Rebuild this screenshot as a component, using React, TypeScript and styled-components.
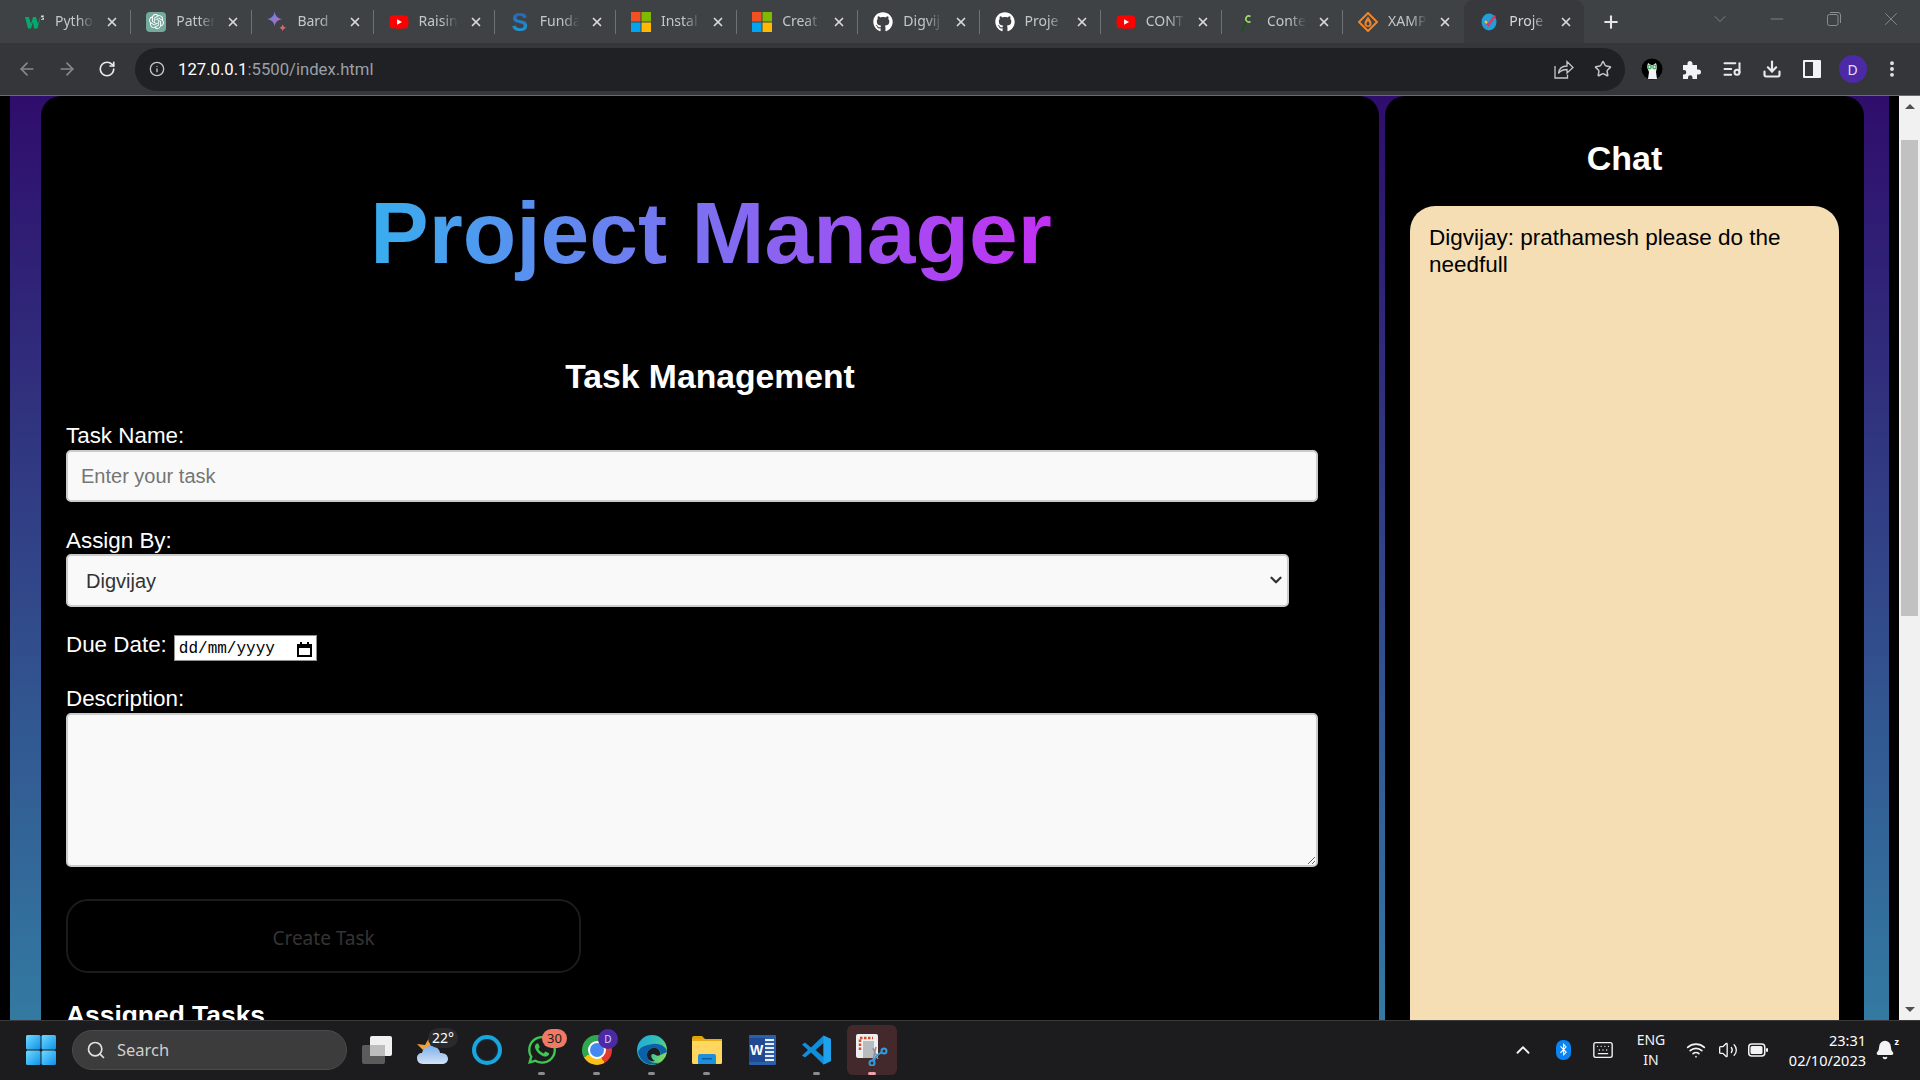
import React, { FC, ReactNode } from 'react';
import styled, { createGlobalStyle } from 'styled-components';
import {
  ArrowLeft, ArrowRight, RotateCw, Info, Star, ListMusic, Download, MoreVertical, Plus, X,
  ChevronDown, ChevronUp, Minus, Search, Keyboard, Wifi, Volume2, Bell,
} from 'lucide-react';
import { FaGithub, FaYoutube, FaWhatsapp, FaBluetoothB } from 'react-icons/fa';
import { SiOpenai } from 'react-icons/si';

const Global = createGlobalStyle`
  html, body { margin: 0; height: 100%; overflow: hidden; background: #000; }
  #root { height: 100%; }
  * { box-sizing: border-box; }
`;

const Shell = styled.div`
  height: 100vh;
  display: flex;
  flex-direction: column;
  font-family: "Liberation Sans", Arial, sans-serif;
`;

/* ---------- browser chrome ---------- */

const TabStrip = styled.div`
  height: 43px;
  flex: none;
  display: flex;
  align-items: stretch;
  padding-left: 10px;
  background: #3e4245;
`;

const Tab = styled.div<{ $active?: boolean }>`
  width: 120.2px;
  flex: none;
  display: flex;
  align-items: center;
  padding: 0 11px 0 15px;
  background: ${p => (p.$active ? '#37393c' : 'transparent')};
  border-radius: ${p => (p.$active ? '9px 9px 0 0' : '0')};
  color: ${p => (p.$active ? '#d6d8da' : '#c4c7c9')};
`;

const TabSep = styled.div<{ $hidden?: boolean }>`
  width: 1px;
  height: 24px;
  flex: none;
  align-self: center;
  background: ${p => (p.$hidden ? 'transparent' : '#6f7275')};
`;

const FavSlot = styled.div`
  width: 20px;
  height: 20px;
  flex: none;
  display: flex;
  align-items: center;
  justify-content: center;
`;

const TabTitle = styled.span`
  flex: 1;
  min-width: 0;
  margin: -2px 0 0 10px;
  font-family: "Noto Sans", sans-serif;
  font-size: 14px;
  white-space: nowrap;
  -webkit-mask-image: linear-gradient(90deg, #000 50%, transparent 85%);
  mask-image: linear-gradient(90deg, #000 50%, transparent 85%);
`;

const TabClose = styled(X)`
  flex: none;
  width: 14px;
  height: 14px;
  margin-left: 4px;
  stroke-width: 3;
  color: #d6d8da;
`;

const NewTab = styled.div`
  width: 54px;
  flex: none;
  display: flex;
  align-items: center;
  justify-content: center;
  color: #e3e5e6;
`;

const WindowControls = styled.div`
  margin-left: auto;
  display: flex;
  color: #8b8e91;
  padding-right: 1px;
`;

const WindowButton = styled.div`
  width: 57px;
  height: 38px;
  display: flex;
  align-items: center;
  justify-content: center;
`;

const RestoreIcon: FC = () => (
  <svg width="14" height="14" viewBox="0 0 14 14" fill="none" stroke="#8b8e91" strokeWidth="1">
    <rect x="0.5" y="2.5" width="10.5" height="11" rx="2" />
    <path d="M3 .5h8a2.5 2.5 0 0 1 2.5 2.5v8" />
  </svg>
);

const Toolbar = styled.div`
  height: 53px;
  flex: none;
  display: flex;
  align-items: center;
  padding-left: 7px;
  background: #35363a;
  border-bottom: 1px solid #6a6b6e;
`;

const ToolButton = styled.div<{ $color?: string }>`
  width: 40px;
  height: 40px;
  flex: none;
  display: flex;
  align-items: center;
  justify-content: center;
  color: ${p => p.$color ?? '#e8eaed'};
`;

const Omnibox = styled.div`
  width: 1490px;
  height: 43px;
  flex: none;
  margin: 0 7px 0 8px;
  display: flex;
  align-items: center;
  padding: 0 3px 0 14px;
  border-radius: 22px;
  background: #202124;
`;

const Url = styled.div`
  flex: 1;
  margin-left: 13px;
  font-family: Roboto, sans-serif;
  font-size: 16.7px;
  color: #9aa0a6;
  span { color: #fff; }
`;

const OmniIcon = styled.div`
  width: 39px;
  display: flex;
  justify-content: center;
  color: #c4c7c9;
`;

const ShareIcon: FC = () => (
  <svg width="20" height="20" viewBox="0 0 20 20" fill="none" stroke="#c4c7c9" strokeWidth="1.3">
    <path d="M1 7v12h12.500v-3.500" />
    <path d="M4.500 14.500c.5-5 4-7.500 8.500-7.500V2.500l6 6-6 5.500V10.500c-3.500 0-6.500 1-8.500 4Z" />
  </svg>
);

const CatBadge: FC = () => (
  <svg width="22" height="22" viewBox="0 0 22 22">
    <circle cx="11" cy="11" r="10.5" fill="#000" />
    <path d="M6 9 L7 5 L10 7 H12 L15 5 L16 9 L15 14 L16 21 H7 L8 14Z" fill="#f2f2f2" />
    <circle cx="8.5" cy="9" r="2.4" fill="#4fae6b" />
    <circle cx="13.5" cy="9" r="2.4" fill="#4fae6b" />
    <circle cx="8.5" cy="9" r="0.9" fill="#eaf7ee" />
    <circle cx="13.5" cy="9" r="0.9" fill="#eaf7ee" />
  </svg>
);

const PuzzleIcon: FC = () => (
  <svg width="19" height="19" viewBox="0 0 19 19">
    <path d="M0 5h4.500V3.500a2.500 2.500 0 0 1 5 0V5H14v4.500h1.500a2.500 2.500 0 0 1 0 5H14V19H9.500v-1.500a2.200 2.200 0 0 0-4.500 0V19H0v-4.500h1a2.300 2.300 0 0 0 0-4.600H0Z" fill="#f2f3f4" />
  </svg>
);

const SidePanelIcon: FC = () => (
  <svg width="18" height="18" viewBox="0 0 18 18">
    <rect x="0" y="0" width="18" height="18" rx="1" fill="#f2f3f4" />
    <rect x="2" y="2" width="8" height="14" fill="#35363a" />
  </svg>
);

const Avatar = styled.div`
  width: 28px;
  height: 28px;
  margin-left: 1px;
  border-radius: 50%;
  background: #4d2aa5;
  color: #e6def8;
  font-family: "Noto Sans", sans-serif;
  font-size: 14px;
  display: flex;
  align-items: center;
  justify-content: center;
`;

/* ---------- favicons ---------- */

const W3Icon: FC = () => (
  <svg width="20" height="14" viewBox="0 0 20 14">
    <path d="M0 2h4l2 7 2-7h3l2 7 2-7h0.5l-3 11.5h-3.5L8 7 6 13.5H3Z" fill="#04a96d" />
    <path d="M16 .5h3v.8l-1 1 1 1v1.5h-3v-.8h2v-.5h-1v-.8h1v-.4h-2Z" fill="#d8dadc" />
  </svg>
);

const OpenAiTile = styled.div`
  width: 20px;
  height: 20px;
  border-radius: 4px;
  background: #74aa9c;
  color: #fff;
  display: flex;
  align-items: center;
  justify-content: center;
`;

const BardIcon: FC = () => (
  <svg width="21" height="21" viewBox="0 0 21 21">
    <defs>
      <linearGradient id="bardA" x1="0" y1="0" x2="1" y2="1">
        <stop offset="0" stopColor="#4f8df5" />
        <stop offset="0.6" stopColor="#9b72cb" />
        <stop offset="1" stopColor="#d96570" />
      </linearGradient>
    </defs>
    <path d="M8 0 C8.500 4.500 11 7 16 8 C11 9 8.500 11.500 8 16 C7.500 11.500 5 9 0 8 C5 7 7.500 4.500 8 0Z" fill="url(#bardA)" />
    <path d="M16.500 13 C16.800 15 17.700 16.200 20 17 C17.700 17.800 16.800 19 16.500 21 C16.200 19 15.300 17.800 13 17 C15.300 16.200 16.200 15 16.500 13Z" fill="#d96570" />
  </svg>
);

const BlueS = styled.span`
  font-family: "Liberation Sans", sans-serif;
  font-weight: 700;
  font-size: 25px;
  line-height: 22px;
  background: linear-gradient(180deg, #2b5fb0, #1b9ee0);
  -webkit-background-clip: text;
  background-clip: text;
  color: transparent;
`;

const MsIcon: FC = () => (
  <svg width="20" height="20" viewBox="0 0 20 20">
    <rect width="9.500" height="9.500" fill="#f25022" />
    <rect x="10.500" width="9.500" height="9.500" fill="#7fba00" />
    <rect y="10.500" width="9.500" height="9.500" fill="#00a4ef" />
    <rect x="10.500" y="10.500" width="9.500" height="9.500" fill="#ffb900" />
  </svg>
);

const ContentIcon: FC = () => (
  <svg width="16" height="20" viewBox="0 0 16 20" fill="none">
    <path d="M3 19 L7 9" stroke="#1f4f22" strokeWidth="2" />
    <path d="M11.500 4.500a3 3 0 1 0 0 5" stroke="#a5d86a" strokeWidth="1.600" />
  </svg>
);

const XamppIcon: FC = () => (
  <svg width="20" height="20" viewBox="0 0 20 20">
    <path d="M10 1 L19 10 L10 19 L1 10Z" fill="none" stroke="#f0842a" strokeWidth="2" strokeLinejoin="round" />
    <path d="M10 4.500 C12 7.500 13.500 9 13.500 11.500 A3.500 3.500 0 0 1 6.500 11.500 C6.500 9 8 7.500 10 4.500Z" fill="#f0842a" />
    <path d="M10 9 C11 10.500 11.500 11 11.500 12 A1.500 1.500 0 0 1 8.500 12 C8.500 11 9 10.500 10 9Z" fill="#3e4245" />
  </svg>
);

const ProjectIcon: FC = () => (
  <svg width="16" height="18" viewBox="0 0 16 18">
    <ellipse cx="8" cy="9" rx="7.500" ry="8.500" fill="#1f9fd8" />
    <path d="M4 8 L7.500 12 L14 2.500" fill="none" stroke="#e0355f" strokeWidth="2.500" />
    <path d="M4 8 L6 10.300" fill="none" stroke="#f2c230" strokeWidth="2.500" />
  </svg>
);

const youtube = <FaYoutube size={20} color="#ff0000" style={{ background: 'linear-gradient(#fff,#fff) center/8px 8px no-repeat' }} />;
const github = <FaGithub size={20} color="#fff" />;

const tabs: { icon: ReactNode; title: string }[] = [
  { icon: <W3Icon />, title: 'Pytho' },
  { icon: <OpenAiTile><SiOpenai size={15} /></OpenAiTile>, title: 'Patter' },
  { icon: <BardIcon />, title: 'Bard' },
  { icon: youtube, title: 'Raisin' },
  { icon: <BlueS>S</BlueS>, title: 'Funda' },
  { icon: <MsIcon />, title: 'Instal' },
  { icon: <MsIcon />, title: 'Creat' },
  { icon: github, title: 'Digvij' },
  { icon: github, title: 'Proje' },
  { icon: youtube, title: 'CONT' },
  { icon: <ContentIcon />, title: 'Conte' },
  { icon: <XamppIcon />, title: 'XAMP' },
];

/* ---------- page ---------- */

const Viewport = styled.div`
  flex: 1;
  min-height: 0;
  display: flex;
  overflow: hidden;
  background: #000;
`;

const Backdrop = styled.div`
  flex: 1;
  min-width: 0;
  margin: 0 10px;
  padding: 0 25px 0 31px;
  display: flex;
  align-items: flex-start;
  gap: 6px;
  overflow: hidden;
  background: linear-gradient(180deg, #2f0d6c 0%, #337aa2 100%);
`;

const Panel = styled.div<{ $width: number }>`
  width: ${p => p.$width}px;
  flex: none;
  background: #000;
  border-radius: 20px;
  color: #fff;
`;

const MainPanel = styled(Panel)`
  padding: 88px 25px 40px;
`;

const ChatPanel = styled(Panel)`
  padding: 42px 25px 0;
`;

const TitleRow = styled.div`
  text-align: center;
  padding-left: 2px;
`;

const Title = styled.h1`
  display: inline-block;
  margin: 0;
  font-size: 87.6px;
  line-height: 98px;
  font-weight: 700;
  background: linear-gradient(90deg, #38aeee, #c42ff3);
  -webkit-background-clip: text;
  background-clip: text;
  color: transparent;
`;

const SectionTitle = styled.h2`
  margin: 74px 0 27px;
  font-size: 33.7px;
  line-height: 40px;
  font-weight: 700;
  text-align: center;
`;

const Label = styled.label`
  display: block;
  font-size: 22.4px;
  line-height: 25px;
  color: #fff;
`;

const fieldBase = `
  display: block;
  border: 2px solid #ccc;
  border-radius: 5px;
  background: #f9f9f9;
  font-family: "Liberation Sans", Arial, sans-serif;
  font-size: 20px;
  color: #333;
`;

const TextInput = styled.input`
  ${fieldBase}
  width: 1252px;
  height: 52px;
  margin: 2px 0 26px;
  padding: 0 13px;
  &::placeholder { color: #757575; }
`;

const SelectWrap = styled.div`
  position: relative;
  width: 1223px;
  margin: 1px 0 25px;
`;

const Select = styled.select`
  ${fieldBase}
  appearance: none;
  width: 100%;
  height: 53px;
  padding: 0 18px;
`;

const SelectCaret = styled(ChevronDown)`
  position: absolute;
  right: 4px;
  top: 17px;
  width: 18px;
  height: 18px;
  stroke-width: 3;
  color: #333;
  pointer-events: none;
`;

const DueRow = styled.div`
  display: flex;
  align-items: flex-start;
  gap: 7px;
  height: 29px;
  margin-bottom: 25px;
`;

const DateBox = styled.div`
  width: 143px;
  height: 26px;
  margin-top: 3px;
  display: flex;
  align-items: center;
  justify-content: space-between;
  padding: 2px 4px 0;
  background: #fff;
  border: 1px solid #8f8f8f;
  color: #000;
  font-family: "Liberation Mono", monospace;
  font-size: 16px;
`;

const Description = styled.textarea`
  ${fieldBase}
  width: 1252px;
  height: 154px;
  margin: 2px 0 32px;
`;

const CreateButton = styled.button`
  display: block;
  width: 40%;
  height: 74px;
  padding-top: 4px;
  border: 2px solid #1b1b1b;
  border-radius: 22px;
  background: transparent;
  color: #343434;
  font-family: "Noto Sans", sans-serif;
  font-size: 19px;
`;

const SubTitle = styled.h3`
  margin: 27px 0 0;
  font-size: 26.4px;
  line-height: 31px;
  font-weight: 700;
`;

const ChatTitle = styled.h2`
  margin: 0 0 28px;
  font-size: 34px;
  line-height: 40px;
  font-weight: 700;
  text-align: center;
`;

const ChatBox = styled.div`
  height: 900px;
  padding: 18px 19px;
  border-radius: 25px;
  background: #f5deb3;
  color: #000;
  font-size: 22.5px;
  line-height: 27px;
`;

const ScrollBar = styled.div`
  width: 21px;
  flex: none;
  display: flex;
  flex-direction: column;
  background: #f1f1f1;
`;

const ScrollArrow = styled.div<{ $down?: boolean }>`
  height: 21px;
  flex: none;
  margin-top: ${p => (p.$down ? 'auto' : '0')};
  display: flex;
  align-items: center;
  justify-content: center;
  &::before {
    content: '';
    border-left: 5px solid transparent;
    border-right: 5px solid transparent;
    ${p => (p.$down ? 'border-top: 5px solid #505050;' : 'border-bottom: 5px solid #505050;')}
  }
`;

const ScrollThumb = styled.div`
  width: 17px;
  height: 476px;
  margin: 23px auto 0;
  background: #c1c1c1;
`;

/* ---------- taskbar ---------- */

const Taskbar = styled.div`
  height: 60px;
  flex: none;
  display: flex;
  align-items: center;
  padding: 0 0 2px 20px;
  background: #1c1c1f;
  border-top: 1px solid #3b3b3d;
  color: #fff;
  font-family: "Noto Sans", sans-serif;
`;

const StartButton = styled.div`
  width: 41px;
  height: 50px;
  flex: none;
  display: flex;
  align-items: center;
  justify-content: center;
`;

const SearchPill = styled.div`
  width: 275px;
  height: 40px;
  flex: none;
  margin: 0 5px 0 11px;
  display: flex;
  align-items: center;
  gap: 11px;
  padding-left: 13px;
  border-radius: 20px;
  border: 1px solid #4a4a4a;
  background: #3c3c3c;
  color: #cfcfcf;
  font-size: 16.5px;
`;

const TaskIcon = styled.div<{ $active?: boolean }>`
  position: relative;
  width: 50px;
  height: 50px;
  flex: none;
  margin-right: 5px;
  display: flex;
  align-items: center;
  justify-content: center;
  border-radius: 6px;
  background: ${p => (p.$active ? '#43292b' : 'transparent')};
`;

const RunDot = styled.div<{ $active?: boolean }>`
  position: absolute;
  left: 50%;
  bottom: 0;
  width: ${p => (p.$active ? 8 : 7)}px;
  height: 3px;
  margin-left: -4px;
  border-radius: 2px;
  background: ${p => (p.$active ? '#f0a0a8' : '#8c8c8c')};
`;

const WeatherTemp = styled.div`
  position: absolute;
  top: 3px;
  left: 21px;
  width: 30px;
  height: 20px;
  border-radius: 10px;
  display: flex;
  align-items: center;
  justify-content: center;
  background: #2a2a2c;
  font-size: 14px;
  color: #fff;
`;

const CountBadge = styled.div`
  position: absolute;
  top: 4px;
  left: 25px;
  width: 25px;
  height: 19px;
  border-radius: 10px;
  display: flex;
  align-items: center;
  justify-content: center;
  background: #f07a63;
  color: #1c1c1f;
  font-size: 13px;
`;

const ProfileBadge = styled.div`
  position: absolute;
  top: 4px;
  left: 26px;
  width: 20px;
  height: 20px;
  border-radius: 50%;
  display: flex;
  align-items: center;
  justify-content: center;
  background: #4d2aa5;
  color: #d9cdf5;
  font-size: 10px;
`;

const CortanaRing = styled.div`
  width: 30px;
  height: 30px;
  border-radius: 50%;
  border: 4px solid #18a6de;
  box-shadow: inset 0 0 2px #0b5f85;
`;

const ChromeBall = styled.div`
  width: 30px;
  height: 30px;
  border-radius: 50%;
  display: flex;
  align-items: center;
  justify-content: center;
  background: conic-gradient(from 30deg, #e33b2e 0 120deg, #fbc116 120deg 210deg, #2fa84f 210deg 360deg);
  &::before {
    content: '';
    width: 14px;
    height: 14px;
    border-radius: 50%;
    background: #4688f1;
    border: 2px solid #fff;
  }
`;

const WinLogo: FC = () => (
  <svg width="30" height="30" viewBox="0 0 30 30">
    <defs>
      <linearGradient id="winG" x1="0" y1="0" x2="1" y2="1">
        <stop offset="0" stopColor="#6fdcff" />
        <stop offset="1" stopColor="#0f8fe8" />
      </linearGradient>
    </defs>
    <rect x="0" y="0" width="14.500" height="14.500" rx="1.500" fill="url(#winG)" />
    <rect x="15.500" y="0" width="14.500" height="14.500" rx="1.500" fill="url(#winG)" />
    <rect x="0" y="15.500" width="14.500" height="14.500" rx="1.500" fill="url(#winG)" />
    <rect x="15.500" y="15.500" width="14.500" height="14.500" rx="1.500" fill="url(#winG)" />
  </svg>
);

const TaskViewIcon: FC = () => (
  <svg width="30" height="28" viewBox="0 0 30 28">
    <rect x="0" y="9" width="23" height="19" rx="2" fill="#5b5b5b" />
    <rect x="8" y="0" width="22" height="20" rx="2" fill="#f0f0f0" />
    <rect x="8" y="9" width="15" height="11" fill="#bdbdbd" />
  </svg>
);

const CloudIcon: FC = () => (
  <svg width="31" height="30" viewBox="0 0 31 30">
    <defs>
      <linearGradient id="cloudG" x1="0" y1="0" x2="0" y2="1">
        <stop offset="0" stopColor="#7fb0e8" />
        <stop offset="1" stopColor="#d2e3f7" />
      </linearGradient>
    </defs>
    <path d="M0 9 L8 10 L12 3 L14 12 L6 15Z" fill="#f2a033" />
    <path d="M6 29 C2 29 0 26 0 23 C0 20 2 18 5 18 C6 13 11 10 16 11 C20 12 23 15 23 18 C28 18 31 20 31 24 C31 27 28 29 25 29Z" fill="url(#cloudG)" />
  </svg>
);

const EdgeIcon: FC = () => (
  <svg width="30" height="30" viewBox="0 0 30 30">
    <defs>
      <linearGradient id="edgeA" x1="0" y1="0" x2="1" y2="0.6">
        <stop offset="0" stopColor="#1aa7e6" />
        <stop offset="0.6" stopColor="#35c1b0" />
        <stop offset="1" stopColor="#7ed957" />
      </linearGradient>
    </defs>
    <circle cx="15" cy="15" r="15" fill="url(#edgeA)" />
    <path d="M1 17 C3 28 15 33 24 27 C17 30 10 26 10 20 C10 15 15 12 19 13 C23 14 24 17 23 20 L30 17 C30 13 24 8 16 9 C8 10 3 12 1 17Z" fill="#0c5fa8" />
    <path d="M10 20 C10 15 15 12 19 13 C22 14 24 17 23 20 C20 22 18 19 16 19 C13 19 14 24 18 26 C14 27 10 25 10 20Z" fill="#1c1c1f" />
  </svg>
);

const FolderIcon: FC = () => (
  <svg width="30" height="30" viewBox="0 0 30 30">
    <path d="M0 3 a2 2 0 0 1 2-2 h8 l3 3 h-13Z" fill="#e0a30c" />
    <rect x="0" y="4" width="30" height="25" rx="1.500" fill="#ffd75e" />
    <rect x="0" y="4" width="30" height="2" fill="#e8ab12" />
    <path d="M6 29 v-8 a2 2 0 0 1 2-2 h14 a2 2 0 0 1 2 2 v8Z" fill="#1c8fdd" />
    <rect x="10" y="23" width="10" height="1.500" fill="#0d5c9e" />
  </svg>
);

const WordIcon = styled.div`
  position: relative;
  width: 27px;
  height: 30px;
  background: repeating-linear-gradient(180deg, #2b5faa 0 2px, #e8eef7 2px 4px);
  border: 2px solid #2b5faa;
  border-radius: 1px;
  &::after {
    content: 'W';
    position: absolute;
    left: -2px;
    top: 1px;
    width: 16px;
    height: 24px;
    background: #1f4a93;
    color: #fff;
    font-family: "Liberation Sans", sans-serif;
    font-weight: 700;
    font-size: 14px;
    line-height: 24px;
    text-align: center;
  }
`;

const VsCodeIcon: FC = () => (
  <svg width="30" height="30" viewBox="0 0 30 30">
    <path d="M21.500 0.500 L29 4 V26 L21.500 29.500 L9 17.500 L3 22.500 L0 20.500 L6 15 L0 9.500 L3 7.500 L9 12.500Z M21.500 8 L13.500 15 L21.500 22Z" fill="#0f8edb" fillRule="evenodd" />
    <path d="M21.500 0.500 L29 4 V26 L21.500 29.500Z" fill="#22a7f0" opacity="0.8" />
  </svg>
);

const SnipIcon: FC = () => (
  <svg width="32" height="32" viewBox="0 0 32 32">
    <rect x="0" y="0" width="22" height="24" rx="2" fill="#eceff1" />
    <path d="M4 16 V4 H17" fill="none" stroke="#d84a2a" strokeWidth="2.500" strokeDasharray="2.500 1.500" />
    <rect x="7" y="7" width="11" height="17" fill="#b9bcbe" />
    <path d="M17 26 L20 13 M17 14 L22 25" stroke="#8c8f92" strokeWidth="1.500" />
    <circle cx="28" cy="17" r="2.500" fill="none" stroke="#2f9be0" strokeWidth="2" />
    <circle cx="16" cy="29" r="2.500" fill="none" stroke="#2f9be0" strokeWidth="2" />
    <path d="M20 22 L26 18 M18 27 L20 22" stroke="#2f9be0" strokeWidth="2" />
  </svg>
);

const Tray = styled.div`
  margin-left: auto;
  padding-right: 19px;
  display: flex;
  align-items: center;
`;

const TrayItem = styled.div<{ $w: number }>`
  width: ${p => p.$w}px;
  height: 48px;
  flex: none;
  display: flex;
  align-items: center;
  justify-content: center;
  color: #f3f3f3;
`;

const BluetoothPill = styled.div`
  width: 15px;
  height: 20px;
  border-radius: 7px;
  background: #0a84f5;
  display: flex;
  align-items: center;
  justify-content: center;
  color: #fff;
`;

const LangText = styled.div`
  font-size: 14px;
  line-height: 20px;
  text-align: center;
`;

const Clock = styled.div`
  width: 93px;
  margin-right: 5px;
  flex: none;
  font-size: 14.5px;
  line-height: 20px;
  text-align: right;
`;

const BatteryIcon: FC = () => (
  <svg width="20" height="14" viewBox="0 0 20 14">
    <rect x="0.750" y="1" width="16" height="12" rx="3" fill="none" stroke="#f3f3f3" strokeWidth="1.500" />
    <rect x="2.500" y="3" width="12" height="8" rx="1.500" fill="#f3f3f3" />
    <rect x="18" y="5" width="2" height="4" rx="1" fill="#f3f3f3" />
  </svg>
);

const BellWrap = styled.div`
  position: relative;
  display: flex;
  margin-right: 2px;
`;

const BellZ = styled.span`
  position: absolute;
  top: -5px;
  right: -4px;
  font-size: 9px;
  font-weight: 700;
  color: #fff;
`;

const App: FC = () => (
  <Shell>
    <Global />
    <TabStrip>
      {tabs.map((t, i) => (
        <React.Fragment key={i}>
          <Tab>
            <FavSlot>{t.icon}</FavSlot>
            <TabTitle>{t.title}</TabTitle>
            <TabClose />
          </Tab>
          <TabSep $hidden={i === tabs.length - 1} />
        </React.Fragment>
      ))}
      <Tab $active>
        <FavSlot><ProjectIcon /></FavSlot>
        <TabTitle>Proje</TabTitle>
        <TabClose />
      </Tab>
      <NewTab><Plus size={20} strokeWidth={2.5} /></NewTab>
      <WindowControls>
        <WindowButton><ChevronDown size={20} strokeWidth={1} /></WindowButton>
        <WindowButton><Minus size={20} strokeWidth={1} /></WindowButton>
        <WindowButton><RestoreIcon /></WindowButton>
        <WindowButton><X size={22} strokeWidth={1} /></WindowButton>
      </WindowControls>
    </TabStrip>

    <Toolbar>
      <ToolButton $color="#87898c"><ArrowLeft size={20} /></ToolButton>
      <ToolButton $color="#87898c"><ArrowRight size={20} /></ToolButton>
      <ToolButton><RotateCw size={18} strokeWidth={2.2} /></ToolButton>
      <Omnibox>
        <Info size={16} color="#c4c7c9" />
        <Url><span>127.0.0.1</span>:5500/index.html</Url>
        <OmniIcon><ShareIcon /></OmniIcon>
        <OmniIcon><Star size={18} strokeWidth={2} /></OmniIcon>
      </Omnibox>
      <ToolButton><CatBadge /></ToolButton>
      <ToolButton><PuzzleIcon /></ToolButton>
      <ToolButton><ListMusic size={20} strokeWidth={2.4} /></ToolButton>
      <ToolButton><Download size={20} strokeWidth={2.6} /></ToolButton>
      <ToolButton><SidePanelIcon /></ToolButton>
      <ToolButton><Avatar>D</Avatar></ToolButton>
      <ToolButton><MoreVertical size={20} strokeWidth={2.6} /></ToolButton>
    </Toolbar>

    <Viewport>
      <Backdrop>
        <MainPanel $width={1338}>
          <TitleRow><Title>Project Manager</Title></TitleRow>
          <SectionTitle>Task Management</SectionTitle>
          <Label>Task Name:</Label>
          <TextInput placeholder="Enter your task" />
          <Label>Assign By:</Label>
          <SelectWrap>
            <Select defaultValue="Digvijay">
              <option>Digvijay</option>
              <option>Prathamesh</option>
            </Select>
            <SelectCaret />
          </SelectWrap>
          <DueRow>
            <Label>Due Date:</Label>
            <DateBox>
              dd/mm/yyyy
              <svg width="15" height="15" viewBox="0 0 15 15">
                <path d="M3 0h2v2h5V0h2v2h3v13H0V2h3Zm-1 6v7h11V6Z" fill="#000" fillRule="evenodd" />
              </svg>
            </DateBox>
          </DueRow>
          <Label>Description:</Label>
          <Description />
          <CreateButton>Create Task</CreateButton>
          <SubTitle>Assigned Tasks</SubTitle>
        </MainPanel>
        <ChatPanel $width={479}>
          <ChatTitle>Chat</ChatTitle>
          <ChatBox>Digvijay: prathamesh please do the needfull</ChatBox>
        </ChatPanel>
      </Backdrop>
      <ScrollBar>
        <ScrollArrow />
        <ScrollThumb />
        <ScrollArrow $down />
      </ScrollBar>
    </Viewport>

    <Taskbar>
      <StartButton><WinLogo /></StartButton>
      <SearchPill><Search size={20} color="#e0e0e0" />Search</SearchPill>
      <TaskIcon><TaskViewIcon /></TaskIcon>
      <TaskIcon><CloudIcon /><WeatherTemp>22°</WeatherTemp></TaskIcon>
      <TaskIcon><CortanaRing /></TaskIcon>
      <TaskIcon><FaWhatsapp size={32} color="#3fc754" /><CountBadge>30</CountBadge><RunDot /></TaskIcon>
      <TaskIcon><ChromeBall /><ProfileBadge>D</ProfileBadge><RunDot /></TaskIcon>
      <TaskIcon><EdgeIcon /><RunDot /></TaskIcon>
      <TaskIcon><FolderIcon /><RunDot /></TaskIcon>
      <TaskIcon><WordIcon /></TaskIcon>
      <TaskIcon><VsCodeIcon /><RunDot /></TaskIcon>
      <TaskIcon $active><SnipIcon /><RunDot $active /></TaskIcon>
      <Tray>
        <TrayItem $w={40}><ChevronUp size={22} strokeWidth={2} /></TrayItem>
        <TrayItem $w={40}><BluetoothPill><FaBluetoothB size={13} /></BluetoothPill></TrayItem>
        <TrayItem $w={40}><Keyboard size={22} strokeWidth={1.5} /></TrayItem>
        <TrayItem $w={56}><LangText>ENG<br />IN</LangText></TrayItem>
        <TrayItem $w={34}><Wifi size={20} /></TrayItem>
        <TrayItem $w={30}><Volume2 size={20} strokeWidth={1.6} /></TrayItem>
        <TrayItem $w={30}><BatteryIcon /></TrayItem>
        <Clock>23:31<br />02/10/2023</Clock>
        <TrayItem $w={30}><BellWrap><Bell size={20} fill="#f3f3f3" /><BellZ>z</BellZ></BellWrap></TrayItem>
      </Tray>
    </Taskbar>
  </Shell>
);

export default App;
